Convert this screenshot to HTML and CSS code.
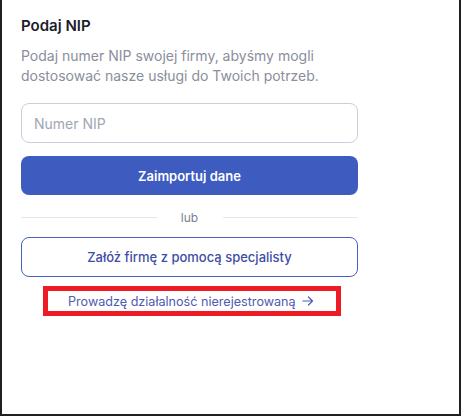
FILE: index.html
```html
<!DOCTYPE html>
<html lang="pl">
<head>
<meta charset="utf-8">
<link rel="stylesheet" href="styles.css">
</head>
<body>
<div class="frame">
  <div class="panel">
    <h1 class="title">Podaj NIP</h1>
    <p class="desc">Podaj numer NIP swojej firmy, abyśmy mogli dostosować nasze usługi do Twoich potrzeb.</p>
    <input class="field" type="text" placeholder="Numer NIP">
    <button class="btn-primary" type="button">Zaimportuj dane</button>
    <div class="divider"><span class="line"></span><span class="or">lub</span><span class="line"></span></div>
    <button class="btn-outline" type="button">Załóż firmę z pomocą specjalisty</button>
    <div class="link-row">
      <a class="link" href="#">Prowadzę działalność nierejestrowaną
        <svg class="arrow" width="12" height="12" viewBox="0 0 12 12" fill="none" stroke="currentColor" stroke-width="1.2" stroke-linecap="round" stroke-linejoin="round"><path d="M1 6h9.5M6.5 2l4 4-4 4"/></svg>
      </a>
    </div>
  </div>
</div>
</body>
</html>
```
FILE: styles.css
```css
* { box-sizing: border-box; }
html, body { margin: 0; padding: 0; background: #fff; }
body { font-family: Inter, "Noto Sans", sans-serif; }
.frame {
  width: 461px;
  height: 416px;
  border-left: 2px solid #202020;
  border-right: 2px solid #202020;
  border-bottom: 2px solid #202020;
  background: #fff;
}
.panel {
  width: 356px;
  padding: 16px 0 0 19px;
  display: flex;
  flex-direction: column;
}
.title {
  margin: 0;
  font-size: 15px;
  font-weight: 600;
  line-height: 20px;
  color: #1c1d2b;
}
.desc {
  margin: 10px 0 0;
  font-size: 14px;
  line-height: 20px;
  color: #8a8e9c;
  width: 300px;
}
.field {
  margin-top: 17px;
  height: 40px;
  width: 100%;
  border: 1px solid #c9d0dc;
  border-radius: 8px;
  padding: 0 12px;
  font-family: inherit;
  font-size: 14px;
  color: #333;
  outline: none;
}
.field::placeholder { color: #a0a6b4; }
.btn-primary {
  margin-top: 13px;
  height: 39px;
  width: 100%;
  border: none;
  border-radius: 8px;
  background: #3e5bbf;
  color: #fff;
  font-family: inherit;
  font-size: 13px;
  font-weight: 600;
}
.divider {
  margin-top: 15px;
  display: flex;
  align-items: center;
  height: 14px;
}
.line { flex: 1; height: 1px; background: #e6e8ee; }
.or { width: 66px; text-align: center; font-size: 12px; color: #7c808e; }
.btn-outline {
  margin-top: 13px;
  height: 40px;
  width: 100%;
  border: 1px solid #4a5fc0;
  border-radius: 8px;
  background: #fff;
  color: #3d4ea6;
  font-family: inherit;
  font-size: 13px;
  font-weight: 500;
}
.link-row {
  margin-top: 9px;
  display: flex;
  padding-left: 22px;
}
.link {
  display: flex;
  align-items: center;
  gap: 6px;
  width: 298px;
  height: 30px;
  border: 5px solid #ed1c24;
  padding-left: 20px;
  font-size: 12.6px;
  color: #4e5cb0;
  text-decoration: none;
}
.arrow { flex: none; }
```
